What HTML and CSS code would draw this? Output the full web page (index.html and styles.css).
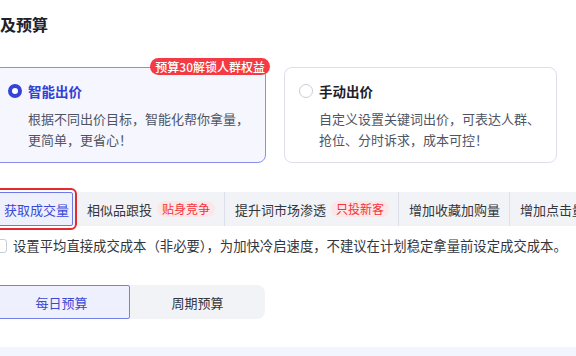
FILE: index.html
```html
<!DOCTYPE html>
<html lang="zh">
<head>
<meta charset="utf-8">
<link rel="stylesheet" href="styles.css">
</head>
<body>
<div class="page">
  <h2 class="title">及预算</h2>
  <div class="cards">
    <div class="card card-active">
      <span class="badge">预算30解锁人群权益</span>
      <div class="card-head">
        <span class="radio radio-on"></span>
        <span class="card-title">智能出价</span>
      </div>
      <p class="card-desc">根据不同出价目标，智能化帮你拿量，<br>更简单，更省心！</p>
    </div>
    <div class="card">
      <div class="card-head">
        <span class="radio"></span>
        <span class="card-title">手动出价</span>
      </div>
      <p class="card-desc">自定义设置关键词出价，可表达人群、<br>抢位、分时诉求，成本可控！</p>
    </div>
  </div>
  <div class="tabs">
    <div class="tab tab-on">获取成交量</div>
    <div class="tab tab-second">相似品跟投<span class="tag">贴身竞争</span></div>
    <div class="tab tab-sep">提升词市场渗透<span class="tag">只投新客</span></div>
    <div class="tab tab-sep">增加收藏加购量</div>
    <div class="tab tab-sep">增加点击量</div>
  </div>
  <div class="check-row">
    <span class="checkbox"></span>
    <span class="check-text">设置平均直接成交成本（非必要），为加快冷启速度，不建议在计划稳定拿量前设定成交成本。</span>
  </div>
  <div class="segment">
    <div class="seg seg-on">每日预算</div>
    <div class="seg seg-off">周期预算</div>
  </div>
</div>
<div class="bottom-bar"></div>
</body>
</html>
```

FILE: styles.css
```css
* { box-sizing: border-box; }
html, body {
  margin: 0;
  padding: 0;
  width: 576px;
  height: 356px;
  overflow: hidden;
  background: #ffffff;
  font-family: "Noto Sans CJK SC", "Noto Sans", sans-serif;
  color: #1f2329;
}
.page {
  margin-left: -7px;
  width: 640px;
  padding-top: 14px;
}
.title {
  margin: 0;
  padding-left: 7px;
  font-size: 16px;
  line-height: 20px;
  font-weight: 700;
  color: #1d2129;
}
.cards {
  display: flex;
  gap: 18px;
  margin-top: 33px;
}
.card {
  position: relative;
  width: 273px;
  height: 96px;
  border: 1px solid #dcdfe8;
  border-radius: 8px;
  background: #ffffff;
  padding: 13px 14px 0 14px;
}
.card-active {
  border-color: #8990e9;
  background: #f6f6ff;
}
.badge {
  position: absolute;
  top: -10px;
  right: -5px;
  height: 17px;
  padding: 0 5px;
  border-radius: 9px;
  background: #f43a44;
  color: #ffffff;
  font-size: 12px;
  font-weight: 500;
  line-height: 17px;
  white-space: nowrap;
}
.card-head {
  display: flex;
  align-items: center;
  gap: 6px;
  height: 20px;
}
.radio {
  width: 14px;
  height: 14px;
  border-radius: 50%;
  border: 1px solid #c9cdd6;
  background: #ffffff;
  flex: none;
}
.radio-on {
  border: 4px solid #3544d6;
}
.card-title {
  font-size: 13.5px;
  font-weight: 700;
  color: #1d2129;
  line-height: 20px;
}
.card-active .card-title {
  color: #3140d4;
}
.card-desc {
  margin: 7px 0 0 20px;
  font-size: 13px;
  line-height: 21px;
  color: #4e5462;
}
.tabs {
  display: flex;
  align-items: stretch;
  height: 34px;
  margin-top: 29px;
  background: #f2f3f7;
}
.tab {
  display: flex;
  align-items: center;
  padding: 0 9px 0 10px;
  font-size: 13px;
  color: #33363d;
  white-space: nowrap;
}
.tab-on {
  width: 80px;
  position: relative;
  color: #3a48d6;
  background: #eef0fe;
  border: 1px solid #6f79e6;
  border-radius: 2px;
  outline: 2px solid #e42a2e;
  outline-offset: 2px;
}
.tab-second {
  padding-left: 14px;
}
.tab-sep {
  border-left: 1px solid #dde0ea;
}
.tag {
  display: inline-block;
  margin-left: 5px;
  height: 16px;
  padding: 0 5px;
  border-radius: 8px;
  background: #fde6e8;
  color: #f2333d;
  font-size: 12px;
  line-height: 16px;
}
.check-row {
  display: flex;
  align-items: center;
  gap: 6px;
  height: 20px;
  margin-top: 10px;
}
.checkbox {
  width: 14px;
  height: 14px;
  border: 1px solid #c9cdd6;
  border-radius: 3px;
  background: #ffffff;
  flex: none;
}
.check-text {
  font-size: 13.35px;
  line-height: 20px;
  color: #33363d;
  white-space: nowrap;
}
.segment {
  display: flex;
  width: 272px;
  height: 34px;
  margin-top: 29px;
  border-radius: 8px;
  background: #f2f3f7;
}
.seg {
  flex: 1;
  display: flex;
  align-items: center;
  justify-content: center;
  font-size: 13px;
  color: #33363d;
}
.seg-on {
  color: #3a48d6;
  background: #eef0fe;
  border: 1px solid #7580e8;
  border-radius: 2px;
}
.bottom-bar {
  position: absolute;
  left: 0;
  top: 347px;
  width: 576px;
  height: 9px;
  background: #f3f5fe;
}
```
